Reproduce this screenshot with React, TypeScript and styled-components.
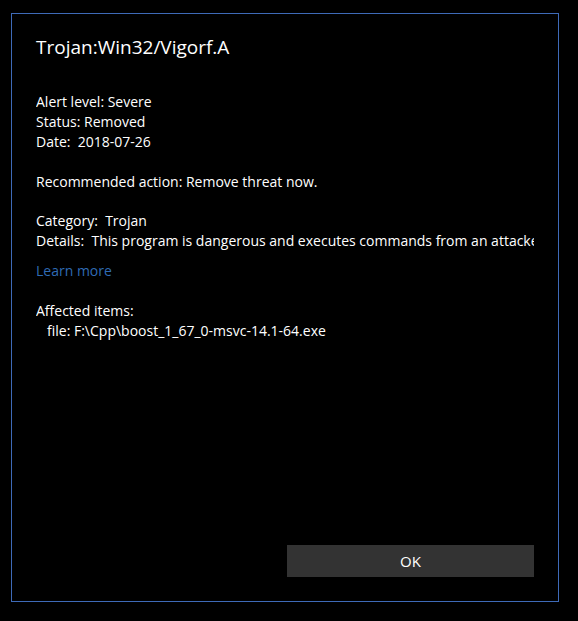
import React from "react";
import styled, { createGlobalStyle } from "styled-components";

const Global = createGlobalStyle`
  html, body { margin: 0; padding: 0; background: #000; }
  body { font-family: "Segoe UI", "Open Sans", "Noto Sans", sans-serif; color: #fff; }
`;

const Page = styled.div`
  padding: 13px 0 0 11px;
`;

const Dialog = styled.div`
  box-sizing: border-box;
  width: 548px;
  height: 589px;
  border: 1px solid #3e6ab8;
  background: #000;
  padding: 19px 24px 24px 24px;
  display: flex;
  flex-direction: column;
`;

const Title = styled.h1`
  margin: 0 0 31px 0;
  font-size: 19px;
  line-height: 28px;
  font-weight: 400;
  color: #fff;
`;

const Section = styled.div<{ $gap?: number }>`
  margin-bottom: ${(p) => p.$gap ?? 20}px;
  font-size: 14px;
  line-height: 20px;
  color: #fff;
`;

const Line = styled.div<{ $indent?: number }>`
  white-space: nowrap;
  overflow: hidden;
  padding-left: ${(p) => p.$indent ?? 0}px;
`;

const Link = styled.a`
  display: block;
  font-size: 14px;
  line-height: 20px;
  color: #2f6bb5;
  text-decoration: none;
  margin-bottom: 20px;
`;

const Footer = styled.div`
  margin-top: auto;
  display: flex;
  justify-content: flex-end;
`;

const Button = styled.button`
  width: 247px;
  height: 32px;
  background: #333333;
  border: none;
  color: #fff;
  font-family: inherit;
  font-size: 15px;
  padding: 0;
`;

export default function App() {
  return (
    <>
      <Global />
      <Page>
        <Dialog>
          <Title>Trojan:Win32/Vigorf.A</Title>
          <Section>
            <Line>Alert level: Severe</Line>
            <Line>Status: Removed</Line>
            <Line>Date:&nbsp; 2018-07-26</Line>
          </Section>
          <Section $gap={19}>
            <Line>Recommended action: Remove threat now.</Line>
          </Section>
          <Section $gap={10}>
            <Line>Category:&nbsp; Trojan</Line>
            <Line>Details:&nbsp; This program is dangerous and executes commands from an attacker.</Line>
          </Section>
          <Link href="#">Learn more</Link>
          <Section>
            <Line>Affected items:</Line>
            <Line $indent={11}>file: F:\Cpp\boost_1_67_0-msvc-14.1-64.exe</Line>
          </Section>
          <Footer>
            <Button>OK</Button>
          </Footer>
        </Dialog>
      </Page>
    </>
  );
}
